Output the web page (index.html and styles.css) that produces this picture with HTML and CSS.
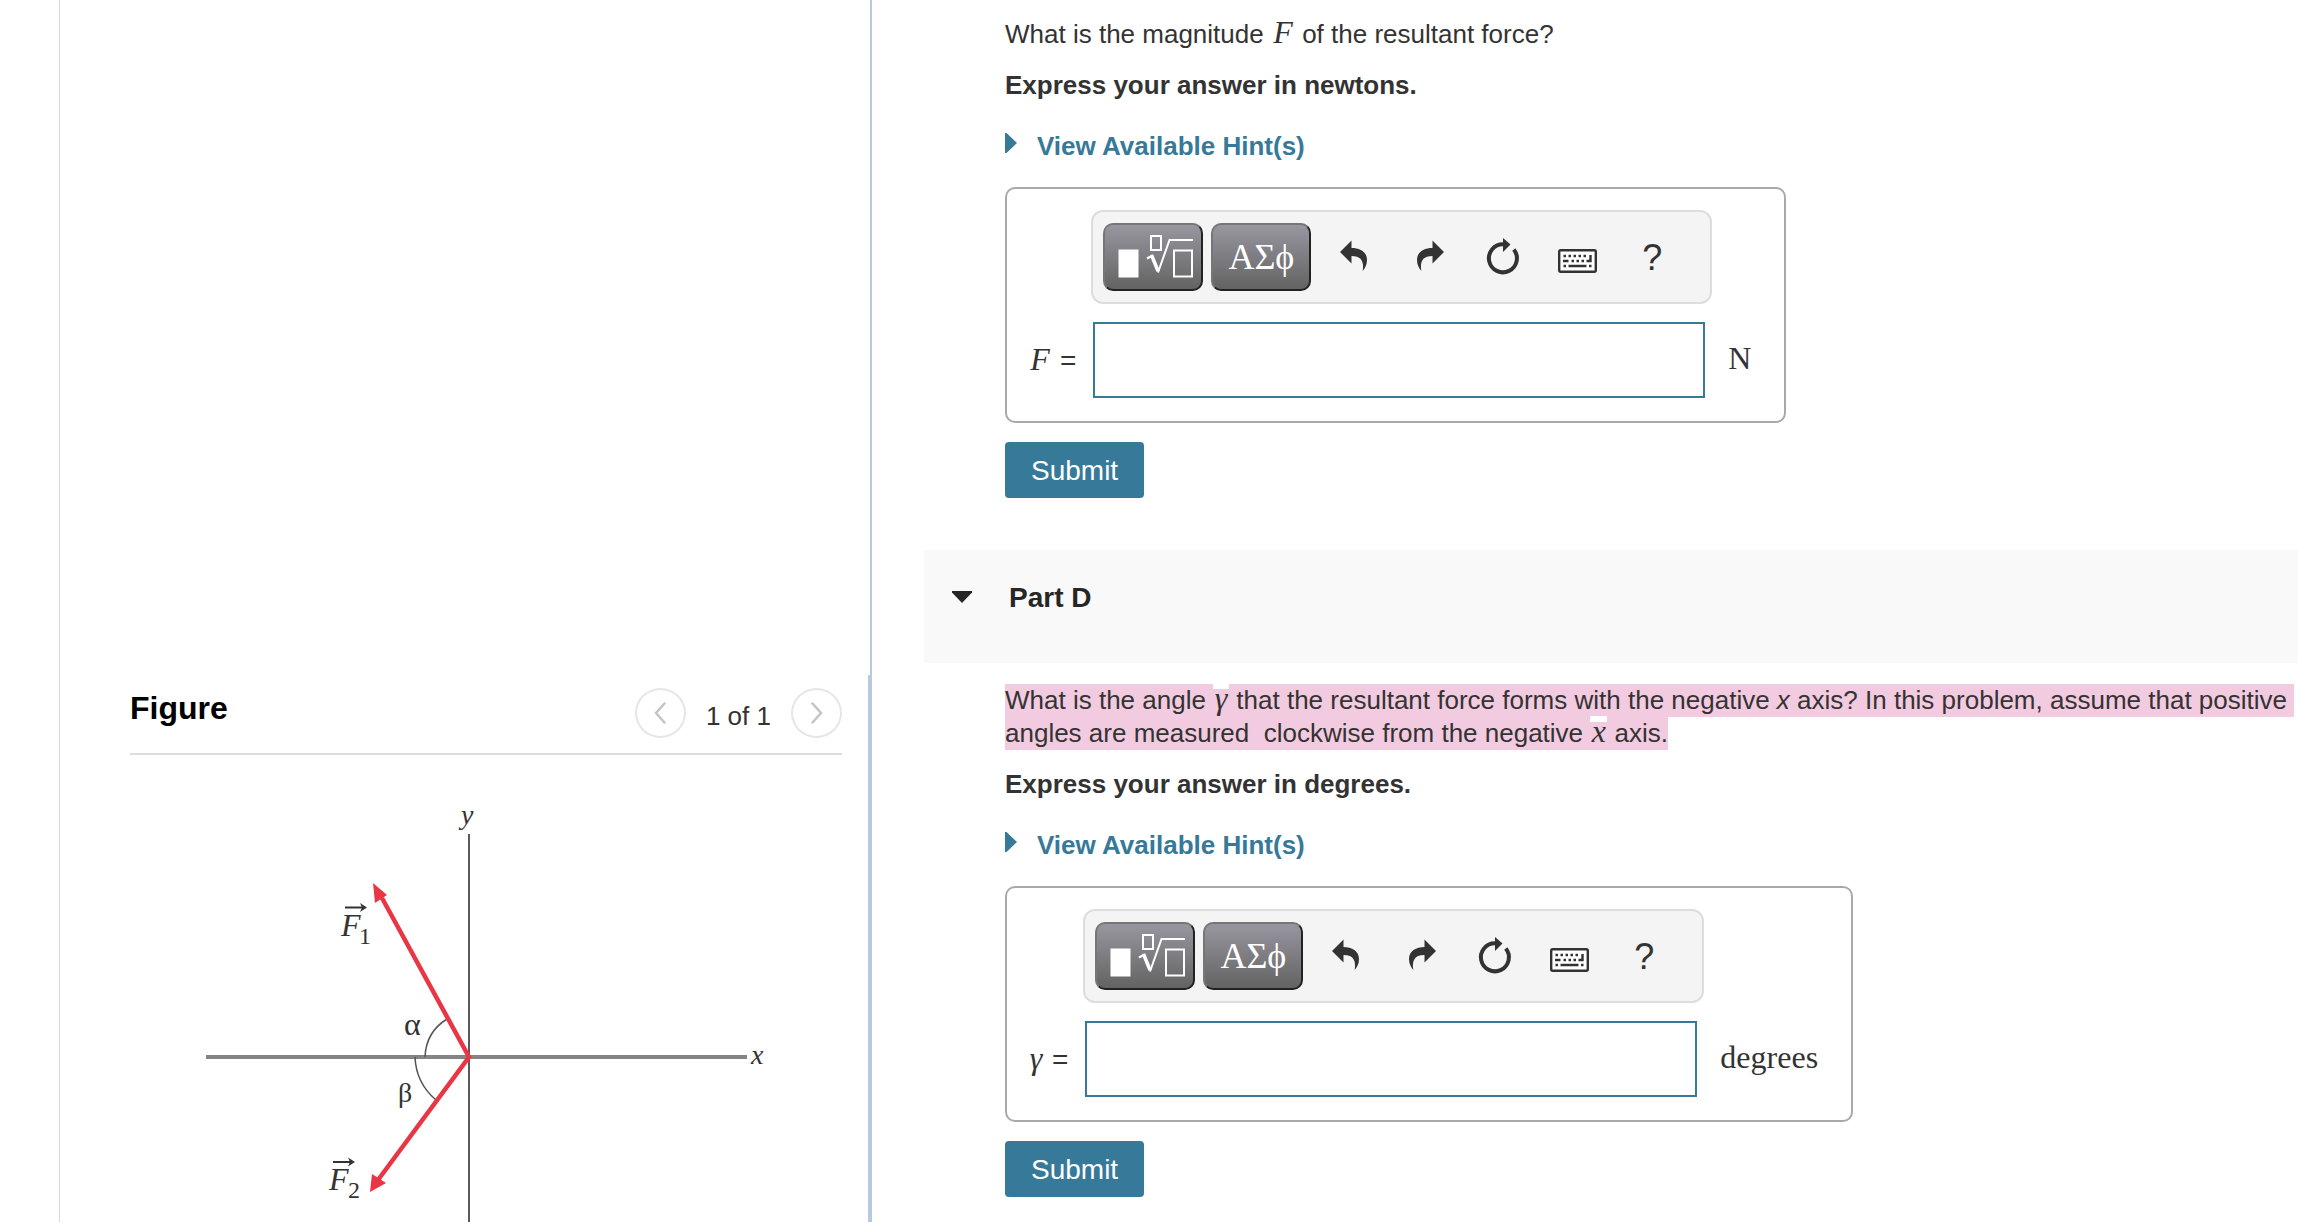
FILE: index.html
```html
<!DOCTYPE html>
<html lang="en">
<head>
<meta charset="utf-8">
<title>Resultant force</title>
<link rel="stylesheet" href="styles.css">
</head>
<body>
<svg class="sprite" aria-hidden="true">
  <symbol id="i-template" viewBox="2 2 96 64">
    <rect x="15.5" y="26.5" width="20" height="28" fill="#fff"/>
    <g fill="none" stroke="#fff" stroke-width="2">
      <rect x="48" y="13" width="10" height="14" stroke-width="2"/>
      <path d="M44 35.5l5.500-3"/>
      <path d="M48.500 32l6.500 16" stroke-width="3.500"/>
      <path d="M55 49.500L66.500 17H90"/>
      <rect x="71" y="27.500" width="18" height="26"/>
    </g>
  </symbol>
  <symbol id="i-undo" viewBox="0 0 40 40">
    <path transform="translate(4 3)" fill="#333" d="M0 12L11.500.5V8C20 8 27 12 27 20c0 5-2 8-4.300 11C24 22 22 16 11.500 16v7.500z"/>
  </symbol>
  <symbol id="i-redo" viewBox="0 0 40 40">
    <path transform="translate(34 3) scale(-1 1)" fill="#333" d="M0 12L11.500.5V8C20 8 27 12 27 20c0 5-2 8-4.300 11C24 22 22 16 11.500 16v7.500z"/>
  </symbol>
  <symbol id="i-reset" viewBox="0 0 40 40">
    <g transform="translate(3 1)">
      <path fill="none" stroke="#333" stroke-width="4" d="M26.800 11.500A14 14 0 1 1 16 6.300"/>
      <path fill="#333" d="M16 0l7.500 6.500L16 14z"/>
    </g>
  </symbol>
  <symbol id="i-keyboard" viewBox="0 0 40 40">
    <g transform="translate(0 12)">
      <rect x="1.200" y="1.200" width="36.600" height="21.600" rx="1.500" fill="#fff" stroke="#333" stroke-width="2.400"/>
      <path fill="none" stroke="#333" stroke-width="2.400" d="M5.500 7H8m2.500 0H13m2.500 0H18m2.500 0H23m2.500 0H28M5 12h5.500m3 0H16m2.500 0H21m2.500 0H26m2.500 0h4V6M5.500 17H8m2.500 0h18m2.500 0h2.500"/>
    </g>
  </symbol>
</svg>

<div class="page">
  <aside class="side">
    <div class="side-problem"></div>
    <section class="figure-panel">
      <header class="figure-head">
        <h2 class="figure-title">Figure</h2>
        <nav class="pager">
          <button class="pager-btn" type="button" aria-label="Previous figure"><svg width="12" height="22" viewBox="0 0 12 22"><path d="M10.500 1.500L2 11l8.500 9.500"/></svg></button>
          <span class="pager-count">1 of 1</span>
          <button class="pager-btn" type="button" aria-label="Next figure"><svg width="12" height="22" viewBox="0 0 12 22"><path d="M1.500 1.500L10 11l-8.500 9.500"/></svg></button>
        </nav>
      </header>
      <svg class="diagram" width="620" height="480" viewBox="0 0 620 480" role="img" aria-label="Two forces F1 and F2 drawn from the origin">
        <path d="M289 54V480" stroke="#5a5a5a" stroke-width="2"/>
        <path d="M26 277H567" stroke="#848484" stroke-width="4"/>
        <path d="M245 277Q246 252 267 239M235 277Q236 303 256 320" fill="none" stroke="#555" stroke-width="1.500"/>
        <path d="M202 118L289 277L198 400" fill="none" stroke="#e93544" stroke-width="4.500"/>
        <path d="M193 103l14 12-12 8zM190 412l2-18 14 9z" fill="#e93544"/>
        <path d="M165 127.500h20M153 382h20" stroke="#333" stroke-width="2"/>
        <path d="M180 123l7 4.500-7 4.500 2-4.500zM168 377.500l7 4.500-7 4.500 2-4.500z" fill="#333"/>
        <text class="sym it" x="281" y="44">y</text>
        <text class="sym it" x="571" y="284">x</text>
        <text class="vec it" x="161" y="156">F</text><text class="sub" x="179" y="164">1</text>
        <text class="vec it" x="149" y="410">F</text><text class="sub" x="168" y="418">2</text>
        <text class="vec" x="224" y="255">α</text>
        <text class="sym" x="218" y="322">β</text>
      </svg>
    </section>
  </aside>

  <main class="work">
    <section class="part part-c">
      <p class="text">What is the magnitude <span class="math cap">F</span> of the resultant force?</p>
      <p class="text strong">Express your answer in newtons.</p>
      <a class="hints" href="#"><svg width="12" height="20" viewBox="0 0 12 20"><path d="M0 0h1.500L12 10 1.500 20H0z" fill="#367999"/></svg>View Available Hint(s)</a>
      <form class="answer">
        <div class="answer-box">
          <div class="toolbar">
            <button class="pad-btn" type="button" aria-label="Templates"><svg width="96" height="64"><use href="#i-template"/></svg></button>
            <button class="pad-btn" type="button">ΑΣϕ</button>
            <div class="tools">
              <button class="tool" type="button" aria-label="Undo"><svg width="40" height="40"><use href="#i-undo"/></svg></button>
              <button class="tool" type="button" aria-label="Redo"><svg width="40" height="40"><use href="#i-redo"/></svg></button>
              <button class="tool" type="button" aria-label="Reset"><svg width="40" height="40"><use href="#i-reset"/></svg></button>
              <button class="tool" type="button" aria-label="Keyboard shortcuts"><svg width="40" height="40"><use href="#i-keyboard"/></svg></button>
              <button class="tool" type="button">?</button>
            </div>
          </div>
          <label class="lhs" for="force"><span class="math cap">F</span><span>=</span></label>
          <input class="entry" id="force" type="text">
          <span class="unit">N</span>
        </div>
        <button class="submit" type="submit">Submit</button>
      </form>
    </section>

    <h2 class="part-head"><button class="part-toggle" type="button"><svg width="20" height="12" viewBox="0 0 20 12"><path d="M0 0h20v1.500L10 12 0 1.500z" fill="#262626"/></svg>Part D</button></h2>

    <section class="part part-d">
      <p class="text"><span class="mark">What is the angle <span class="math greek notch">γ</span> that the resultant force forms with the negative <i>x</i> axis? In this problem, assume that positive&nbsp; angles are measured&nbsp; clockwise from the negative <span class="math var notch">x</span> axis.</span></p>
      <p class="text strong">Express your answer in degrees.</p>
      <a class="hints" href="#"><svg width="12" height="20" viewBox="0 0 12 20"><path d="M0 0h1.500L12 10 1.500 20H0z" fill="#367999"/></svg>View Available Hint(s)</a>
      <form class="answer">
        <div class="answer-box">
          <div class="toolbar">
            <button class="pad-btn" type="button" aria-label="Templates"><svg width="96" height="64"><use href="#i-template"/></svg></button>
            <button class="pad-btn" type="button">ΑΣϕ</button>
            <div class="tools">
              <button class="tool" type="button" aria-label="Undo"><svg width="40" height="40"><use href="#i-undo"/></svg></button>
              <button class="tool" type="button" aria-label="Redo"><svg width="40" height="40"><use href="#i-redo"/></svg></button>
              <button class="tool" type="button" aria-label="Reset"><svg width="40" height="40"><use href="#i-reset"/></svg></button>
              <button class="tool" type="button" aria-label="Keyboard shortcuts"><svg width="40" height="40"><use href="#i-keyboard"/></svg></button>
              <button class="tool" type="button">?</button>
            </div>
          </div>
          <label class="lhs" for="angle"><span class="math greek">γ</span><span>=</span></label>
          <input class="entry" id="angle" type="text">
          <span class="unit">degrees</span>
        </div>
        <button class="submit" type="submit">Submit</button>
      </form>
    </section>
  </main>
</div>
</body>
</html>
```

FILE: styles.css
```css
* { box-sizing: border-box; }

body {
  margin: 0;
  background: #fff;
  color: #333;
  font: 26px/33px "Liberation Sans", Arial, sans-serif;
}

h2, p { margin: 0; }

button {
  margin: 0;
  padding: 0;
  border: 0;
  background: none;
  color: inherit;
  font: inherit;
  cursor: pointer;
}

svg { display: block; }

.sprite { display: none; }

.page {
  display: grid;
  grid-template-columns: 436fr 713fr;
  min-height: 100vh;
}

/* Left column: problem text above, figure below */
.side {
  display: grid;
  grid-template-rows: 675fr 547fr;
  height: 100vh;
  margin-left: 59px;
  border-left: 1px solid #d9d9d9;
}

.side-problem { border-right: 2px solid #b9cade; }

.figure-panel {
  min-height: 0;
  overflow: hidden;
  padding: 13px 26px 0 70px;
  border-right: 4px solid #b9cade;
}

.figure-head {
  display: flex;
  justify-content: space-between;
  padding-bottom: 15px;
  border-bottom: 2px solid #ddd;
}

.figure-title {
  color: #000;
  font-size: 32px;
  line-height: 40px;
}

.pager {
  display: flex;
  align-items: center;
  gap: 20px;
}

.pager-btn {
  display: flex;
  align-items: center;
  justify-content: center;
  width: 51px;
  height: 50px;
  border: 2px solid #e6e6e6;
  border-radius: 50%;
}

.pager-btn path {
  fill: none;
  stroke: #c4c4c4;
  stroke-width: 2.5;
  stroke-linecap: round;
}

.pager-count { padding-top: 6px; }

.diagram { margin: 25px 0 0 50px; }

.diagram text {
  fill: #333;
  font-family: "Liberation Serif", "Times New Roman", serif;
}

.diagram .it { font-style: italic; }
.diagram .sym { font-size: 28px; }
.diagram .vec { font-size: 32px; }
.diagram .sub { font-size: 24px; }

/* Right column: question parts */
.work {
  min-width: 0;
  padding-left: 52px;
}

.part { padding-left: 81px; }
.part-c { padding-top: 18px; padding-bottom: 52px; }
.part-d { padding-top: 21px; }

.strong {
  margin-top: 18px;
  font-weight: bold;
}

.math {
  display: inline-block;
  font: italic 32px/24px "Liberation Serif", "Times New Roman", serif;
  text-align: center;
}

.cap { width: 24px; }
.greek { width: 16px; }
.var { width: 17px; }

.mark {
  padding: 1px 0 2px;
  background: #f3cbe0;
}

.notch { position: relative; }

.notch::before {
  content: "";
  position: absolute;
  top: -3px;
  left: 0;
  width: 100%;
  height: 6px;
  background: #fff;
}

.hints {
  display: flex;
  gap: 20px;
  width: max-content;
  margin-top: 28px;
  color: #367999;
  font-weight: bold;
  text-decoration: none;
}

.hints svg { margin-top: 3px; }

.answer { margin-top: 24px; }

.answer-box {
  display: grid;
  grid-template-columns: auto auto auto;
  align-items: center;
  row-gap: 18px;
  width: max-content;
  padding: 21px 33px 23px 21px;
  border: 2px solid #a9a9a9;
  border-radius: 10px;
}

.toolbar {
  grid-column: 2;
  display: flex;
  align-items: center;
  gap: 8px;
  height: 94px;
  padding: 0 21px 0 10px;
  border: 2px solid #ddd;
  border-radius: 12px;
  background: #f4f4f4;
}

.pad-btn {
  width: 100px;
  height: 68px;
  border: 2px solid;
  border-color: #767676 #222 #222 #767676;
  border-radius: 10px;
  background: linear-gradient(#9896a0, #636363);
  color: #fff;
  font: 36px/60px "Liberation Serif", "Times New Roman", serif;
}

.tools { display: flex; }

.tool {
  display: flex;
  align-items: center;
  justify-content: center;
  width: 74px;
  height: 68px;
  font-size: 36px;
}

.lhs {
  grid-column: 1;
  display: flex;
  align-items: baseline;
  gap: 8px;
  margin-right: 15px;
  font-size: 28px;
}

.entry {
  width: 612px;
  height: 76px;
  margin-left: 2px;
  padding: 0 12px;
  border: 2px solid #367999;
  background: #fff;
  font: inherit;
  outline: none;
}

.unit {
  margin-left: 16px;
  padding-bottom: 4px;
  font: 32px/36px "Liberation Serif", "Times New Roman", serif;
}

.submit {
  display: block;
  margin-top: 19px;
  padding: 0 26px;
  height: 56px;
  border-radius: 4px;
  background: #367999;
  color: #fff;
  font-size: 28px;
}

.part-head {
  padding: 31px 28px 49px;
  background: #f9f9f9;
  color: #262626;
  font-size: 28px;
}

.part-toggle {
  display: flex;
  align-items: center;
  gap: 37px;
}

.part-toggle svg { margin-bottom: 2px; }
```
